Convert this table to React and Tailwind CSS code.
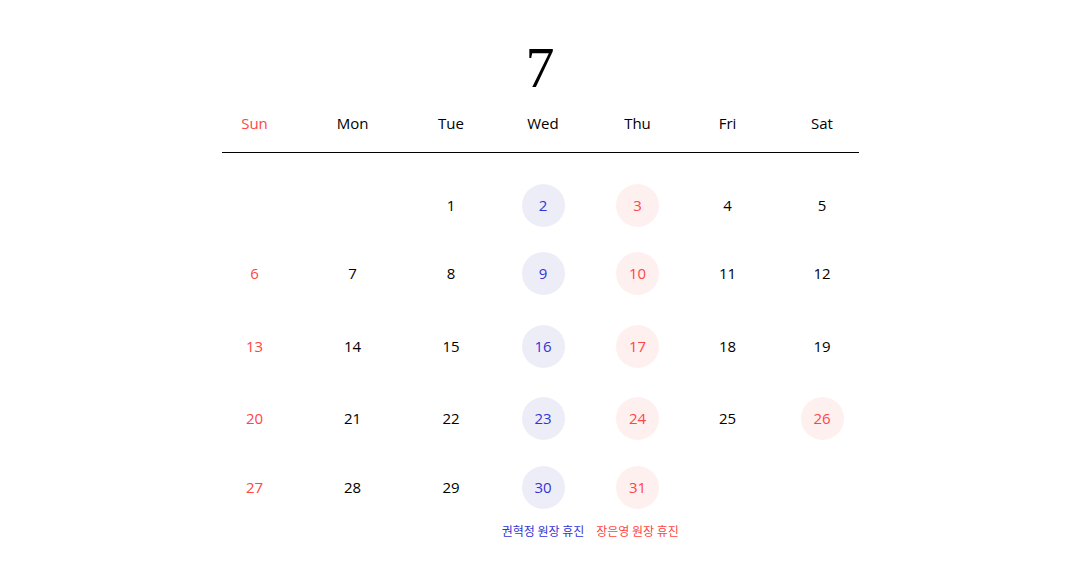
import React from 'react';

const RED = 'text-[#ff4545]';
const BLUE = 'text-[#3434d6]';

// column widths follow the reference's uneven table cells
const cols = 'grid grid-cols-[82px_98px_95px_93px_92px_92px_85px]';
const shift = ['pr-4', '', 'pl-1', '', 'pl-1', '', 'pl-3'];
const rowH = ['h-[66px]', 'h-[70px]', 'h-[76px]', 'h-[68px]', 'h-[70px]'];

const days = ['Sun', 'Mon', 'Tue', 'Wed', 'Thu', 'Fri', 'Sat'];

const weeks = [
  [null, null, 1, 2, 3, 4, 5],
  [6, 7, 8, 9, 10, 11, 12],
  [13, 14, 15, 16, 17, 18, 19],
  [20, 21, 22, 23, 24, 25, 26],
  [27, 28, 29, 30, 31, null, null],
];

function Day({ n, col }) {
  if (n === null) return <div />;
  let bg = '';
  let color = 'text-black';
  if (col === 0) color = RED;
  if (col === 3) {
    bg = 'bg-[#ededf7]';
    color = BLUE;
  }
  if (col === 4 || n === 26) {
    bg = 'bg-[#fff0f0]';
    color = RED;
  }
  return (
    <div className={`flex items-center justify-center ${shift[col]}`}>
      <span className={`flex h-[43px] w-[43px] items-center justify-center rounded-full text-[15px] ${bg} ${color}`}>
        {n}
      </span>
    </div>
  );
}

export default function App() {
  return (
    <div className="min-h-[572px] w-full bg-white font-['Open_Sans',sans-serif] font-normal">
      <div className="mx-auto w-[637px] pt-[36px]">
        <h1 className="text-center font-['Liberation_Serif',serif] text-[58px] font-normal leading-[64px] text-black">
          7
        </h1>
        <div className={`${cols} mt-[12px] h-[41px] items-start border-b border-black`}>
          {days.map((d, i) => (
            <div key={d} className={`text-center text-[15px] leading-[22px] ${shift[i]} ${i === 0 ? RED : 'text-black'}`}>
              {d}
            </div>
          ))}
        </div>
        <div className="pt-[19px]">
          {weeks.map((w, r) => (
            <div key={r} className={`${cols} ${rowH[r]} items-center`}>
              {w.map((n, c) => (
                <Day key={c} n={n} col={c} />
              ))}
            </div>
          ))}
        </div>
        <div className={`${cols} font-['Noto_Sans_CJK_KR',sans-serif] text-[12px] leading-[18px] font-normal`}>
          <div />
          <div />
          <div />
          <div className={`text-center whitespace-nowrap ${BLUE}`}>권혁정 원장 휴진</div>
          <div className={`text-center whitespace-nowrap pl-1 ${RED}`}>장은영 원장 휴진</div>
          <div />
          <div />
        </div>
      </div>
    </div>
  );
}
